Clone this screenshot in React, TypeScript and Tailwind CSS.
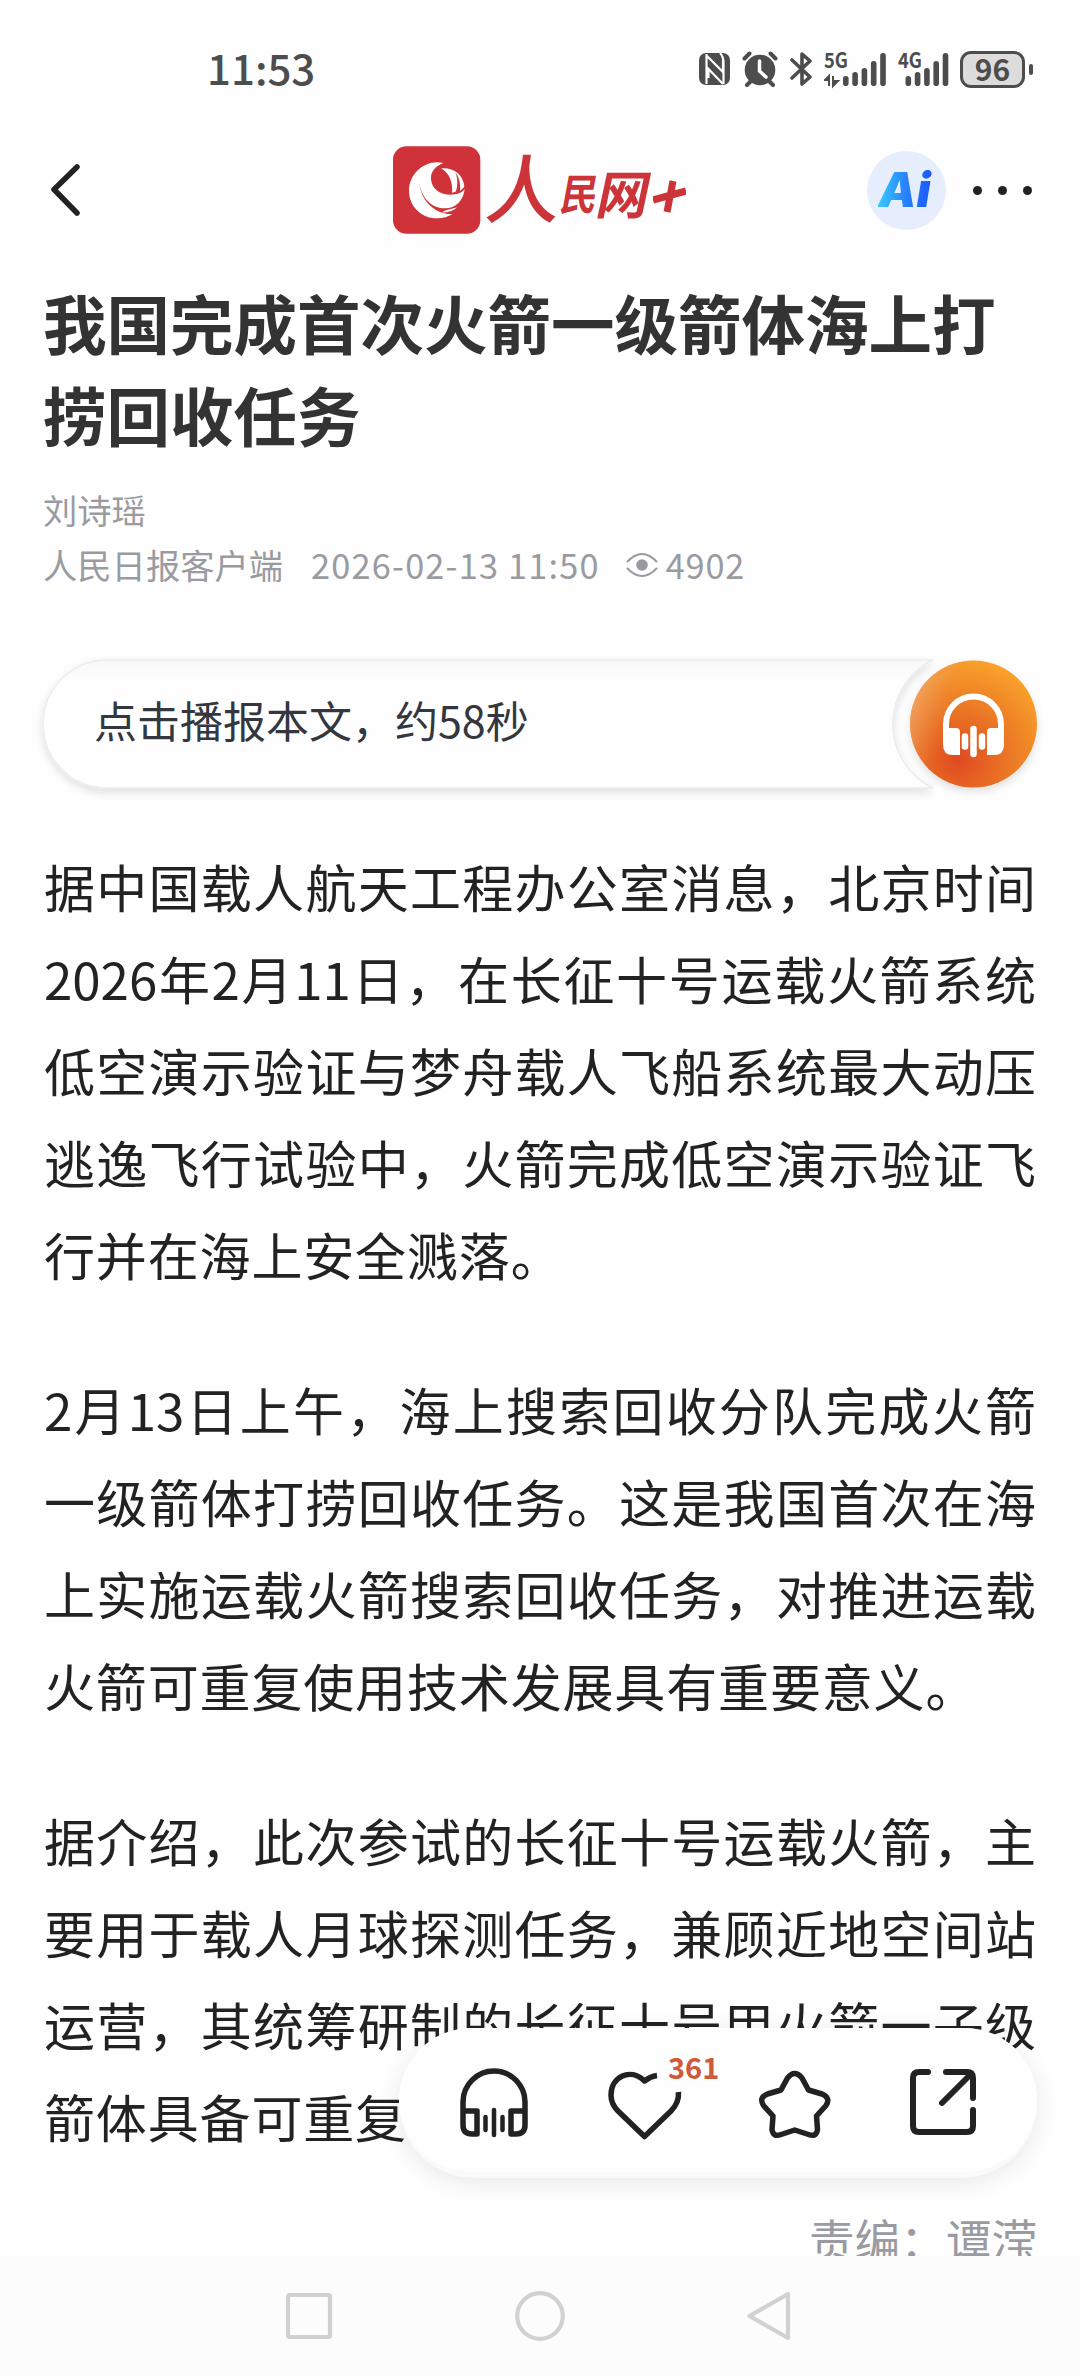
import type { ReactNode } from 'react'

const paragraphs = [
  [
    '据中国载人航天工程办公室消息，北京时间',
    '2026年2月11日，在长征十号运载火箭系统',
    '低空演示验证与梦舟载人飞船系统最大动压',
    '逃逸飞行试验中，火箭完成低空演示验证飞',
    '行并在海上安全溅落。',
  ],
  [
    '2月13日上午，海上搜索回收分队完成火箭',
    '一级箭体打捞回收任务。这是我国首次在海',
    '上实施运载火箭搜索回收任务，对推进运载',
    '火箭可重复使用技术发展具有重要意义。',
  ],
  [
    '据介绍，此次参试的长征十号运载火箭，主',
    '要用于载人月球探测任务，兼顾近地空间站',
    '运营，其统筹研制的长征十号甲火箭一子级',
    '箭体具备可重复',
  ],
]

function Signal({ label, x, children }: { label: string; x: number; children?: ReactNode }) {
  const heights = [10, 14, 18, 25, 33]
  return (
    <svg width="64" height="56" viewBox="0 -10 64 56" fill="#4d4d4d">
      <text x="0" y="17" fontSize="21" fontWeight="700" textLength="24" lengthAdjust="spacingAndGlyphs">{label}</text>
      {heights.map((h, i) => (
        <rect key={h} x={x + i * 9.3} y={35 - h} width="5.6" height={h} rx="2.8" />
      ))}
      {children}
    </svg>
  )
}

function StatusBar() {
  return (
    <div className="flex h-[136px] items-start pl-[207px] text-[#4d4d4d]">
      <div className="mt-[37px] w-[110px] text-[42px] leading-[60px] font-medium">11:53</div>
      <div className="mt-[50px] ml-[382px] flex h-[38px] items-center">
        <svg width="32" height="34" viewBox="0 0 32 34">
          <rect x="0" y="1" width="31" height="32" rx="7" fill="#4d4d4d" />
          <path d="M7.500 2v30M7 3l17 17V8M24 32L9.500 17v9" fill="none" stroke="#fefefe" strokeWidth="2.200" />
          <path d="M21 1c3 3 3.500 6 3.500 10v21" fill="none" stroke="#fefefe" strokeWidth="2.200" />
        </svg>
        <svg className="ml-[11px]" width="36" height="36" viewBox="0 0 36 36">
          <circle cx="18" cy="19" r="15.3" fill="#4d4d4d" />
          <path d="M2.500 7.500l5-5M33.500 7.500l-5-5M5 34l4-4M31 34l-4-4" stroke="#4d4d4d" strokeWidth="4" strokeLinecap="round" />
          <path d="M17.500 10v10l6.500 6" fill="none" stroke="#fefefe" strokeWidth="3.500" strokeLinecap="round" />
        </svg>
        <svg className="ml-[12px]" width="24" height="36" viewBox="0 0 24 36" fill="none" stroke="#4d4d4d" strokeWidth="3.600" strokeLinejoin="round" strokeLinecap="round">
          <path d="M2 9l18 17-8 7V3l8 7L2 27" />
        </svg>
        <span className="ml-[10px]">
          <Signal label="5G" x={19}>
            <path d="M5 35V25l-4 4h4M9 25v10l5-5H9" stroke="#4d4d4d" strokeWidth="2" />
          </Signal>
        </span>
        <span className="ml-[10px]">
          <Signal label="4G" x={7.5} />
        </span>
        <div className="-ml-[2px] flex h-[37px] w-[65px] items-center justify-center rounded-[11px] border-[3px] border-[#4d4d4d] bg-[#dcdcdc] pb-[2px] text-[30px] leading-none font-bold">
          96
        </div>
        <div className="ml-[4px] h-[11px] w-[4px] rounded-full bg-[#4d4d4d]" />
      </div>
    </div>
  )
}

function BrandLogo() {
  return (
    <div className="flex items-start text-[#cc343a]">
      <svg width="88" height="88" viewBox="39 46 264 264">
        <rect x="39" y="47" width="262" height="262" rx="40" fill="#cf3339" />
        <path d="M190 97C140 84 87 125 87 180c0 46 36 83 84 83 18 0 34-5 46-13-50 2-96-38-100-100 4 42 30 82 78 83 32 0 56-24 59-58-8 12-24 17-42 17-34 0-58-20-59-48-1-22 14-38 37-47z" fill="#fff" />
        <path d="M183 113c32-4 66 14 70 54-3 6-7 10-13 13 2-24-3-40-13-54 6 18 7 38 1 56-5 3-8 4-12 4 3-30-7-58-33-73z" fill="#fff" />
        <path d="M186 245c16 2 34-4 45-15-12 5-32 6-45 15z" fill="#fff" />
      </svg>
      <div className="ml-[6px] flex h-[88px] items-end font-medium leading-none">
        <span className="w-[75px] -skew-x-6 text-[74px] leading-[98px]">人</span>
        <span className="w-[37px] -skew-x-12 scale-y-115 text-[37px] font-bold leading-[84px]">民</span>
        <span className="w-[51px] -skew-x-12 text-[52px] font-bold leading-[84px]">网</span>
        <svg className="mb-[21px] ml-[3px]" width="33" height="33" viewBox="0 0 33 33">
          <path d="M0 20l33-9M20 1l-6 31" stroke="#cc343a" strokeWidth="7" />
        </svg>
      </div>
    </div>
  )
}

function Header() {
  return (
    <div className="flex h-[108px] items-center">
      <svg className="ml-[48px]" width="34" height="54" viewBox="0 0 34 54" fill="none" stroke="#222" strokeWidth="5.500" strokeLinecap="round" strokeLinejoin="round">
        <path d="M29 4L6 26.500 29 50" />
      </svg>
      <div className="ml-[311px] w-[297px]"><BrandLogo /></div>
      <div className="ml-[177px] flex h-[79px] w-[79px] items-center justify-center rounded-full bg-[#e6eefd]">
        <span className="bg-linear-to-r from-[#3cc8ff] via-[#2a80fb] via-50% to-[#1c50ff] bg-clip-text pr-1 font-[Inter] text-[48px] leading-none font-black text-transparent italic">Ai</span>
      </div>
      <div className="ml-[27px] flex gap-[16px]">
        <i className="size-[9px] rounded-full bg-[#222]" />
        <i className="size-[9px] rounded-full bg-[#222]" />
        <i className="size-[9px] rounded-full bg-[#222]" />
      </div>
    </div>
  )
}

function PlayerCard() {
  return (
    <div className="relative mt-[68px] flex h-[128px] items-center pl-[51px]">
      <svg className="absolute -top-[20px] -left-[20px]" width="1034" height="178" viewBox="0 0 1034 178">
        <defs>
          <linearGradient id="card" x1="0" y1="0" x2="0" y2="1">
            <stop offset="0" stopColor="#f8f8f8" />
            <stop offset="0.18" stopColor="#fefefe" />
          </linearGradient>
          <radialGradient id="orange" cx="0.38" cy="0.78" r="0.85">
            <stop offset="0" stopColor="#df4a20" />
            <stop offset="0.45" stopColor="#ea7525" />
            <stop offset="1" stopColor="#fba72c" />
          </radialGradient>
          <linearGradient id="sheen" x1="0" y1="0.4" x2="0.3" y2="0.5">
            <stop offset="0" stopColor="#f0b080" stopOpacity="0.6" />
            <stop offset="1" stopColor="#f08a40" stopOpacity="0" />
          </linearGradient>
          <filter id="soft" x="-10%" y="-20%" width="120%" height="150%">
            <feDropShadow dx="0" dy="4" stdDeviation="4" floodOpacity="0.12" />
          </filter>
        </defs>
        <path d="M84 20H910A71 71 0 0 0 910 148H84A64 64 0 0 1 84 20Z" fill="url(#card)" stroke="#ececec" strokeWidth="1.500" filter="url(#soft)" />
        <circle cx="950.500" cy="84" r="63.500" fill="url(#orange)" filter="url(#soft)" />
        <circle cx="950.500" cy="84" r="63.500" fill="url(#sheen)" />
        <path d="M923 90V84a27.500 27.500 0 0 1 55 0v6" fill="none" stroke="#fff" strokeWidth="6" />
        <path d="M920 88h13q4 0 4 4v23h-7q-10 0-10-10zM981 88h-13q-4 0-4 4v23h7q10 0 10-10z" fill="#fff" />
        <path d="M942 96.500v10M950.500 89v25M959 96.500v10" stroke="#fff" strokeWidth="6.500" strokeLinecap="round" />
      </svg>
      <span className="relative -top-[5px] text-[43px] text-[#343640]">点击播报本文，约58秒</span>
    </div>
  )
}

function ActionPill() {
  return (
    <div className="absolute top-[2028px] left-[399px] h-[150px] w-[638px] rounded-full bg-[#fafafa] shadow-[0_4px_24px_rgba(0,0,0,0.09)]">
      <div className="h-[144px] rounded-full bg-[#fefefe]">
        <svg width="638" height="144" viewBox="0 0 638 144" fill="none" stroke="#222" strokeWidth="5.500" strokeLinecap="round" strokeLinejoin="round">
          {/* listen */}
          <path d="M64 82V74a31 31 0 0 1 62 0V97q0 9-9 9h-5V83h14M64 82v15q0 9 9 9h5V83H64" />
          <path d="M86.500 89v13M95 82v25M103.500 89v13" strokeWidth="4.500" />
          {/* like, open at the top right for the counter */}
          <path d="M258 47.500c-4 .5-8 2-12.500 5.500C231 39 212 49 212 67c0 7 3 12 7 16l26.500 25.500L272 83c5-5 8-11 7.500-19" strokeLinecap="butt" />
          {/* collect */}
          <path d="M388.500 50q7-9 14.500 0l6.500 12 13.500 4q9 4 4 11.500L417.500 88l1 13.500q-1 8-9 5L395.700 102l-13.700 4.500q-8 3-9-5l1-13.500-9.500-10.500q-5-8 4-11.500l13.500-4z" />
          {/* share */}
          <path d="M529 44h-9q-6 0-6 6v48q0 6 6 6h48q6 0 6-6V82M547 44h21q6 0 6 6v20M572 46L543 75" strokeWidth="6" />
        </svg>
      </div>
      <span className="absolute top-[23px] left-[269px] text-[29px] leading-[30px] font-bold text-[#cf5a3a]">361</span>
    </div>
  )
}

function NavBar() {
  return (
    <div className="absolute bottom-0 left-0 flex h-[120px] w-full items-start bg-[#fcfcfc] pt-[34px]">
      <svg className="ml-[283px]" width="510" height="52" viewBox="0 0 510 52" fill="none" stroke="#d1d1d1" strokeWidth="4.200" strokeLinejoin="round">
        <rect x="5" y="5" width="42" height="42" rx="1.500" />
        <circle cx="257" cy="26" r="22.800" />
        <path d="M505 4v44L466.500 26z" />
      </svg>
    </div>
  )
}

export default function App() {
  return (
    <div className="relative h-[2376px] w-[1080px] overflow-hidden bg-[#fefefe] font-['Noto_Sans_CJK_SC',sans-serif]">
      <StatusBar />
      <Header />
      <main className="px-[43px]">
        <h1 className="mt-[31px] text-[63.500px] leading-[92px] font-bold whitespace-nowrap text-[#333]">
          我国完成首次火箭一级箭体海上打
          <br />
          捞回收任务
        </h1>
        <div className="mt-[23px] text-[34.300px] leading-[55px] whitespace-nowrap text-[#9a9ba0]">
          <p>刘诗瑶</p>
          <div className="flex items-center">
            <span>人民日报客户端</span>
            <span className="ml-[28px] tracking-[1.200px]">2026-02-13 11:50</span>
            <svg className="ml-[26px]" width="32" height="26" viewBox="0 0 32 26" fill="none" stroke="#9a9ba0" strokeWidth="2">
              <path d="M1 10Q16-6 31 10M1 16Q16 32 31 16" />
              <circle cx="16" cy="13" r="5.800" fill="#9a9ba0" stroke="none" />
            </svg>
            <span className="ml-[8px] tracking-[0.800px]">4902</span>
          </div>
        </div>
        <PlayerCard />
        <article className="mt-[51.600px] flex flex-col gap-[63.400px] px-[1px] text-[51px] leading-[92px] text-[#222]">
          {paragraphs.map((lines) => (
            <div key={lines[0]}>
              {lines.map((line, i) => (
                <p
                  key={line}
                  className={
                    i < lines.length - 1
                      ? 'w-[992px] whitespace-nowrap [text-align-last:justify]'
                      : 'whitespace-nowrap tracking-[0.850px]'
                  }
                >
                  {line}
                </p>
              ))}
            </div>
          ))}
        </article>
        <p className="mt-[30px] text-right text-[45.600px] leading-[92px] text-[#9a9ba0]">责编：谭滢</p>
      </main>
      <ActionPill />
      <NavBar />
    </div>
  )
}
